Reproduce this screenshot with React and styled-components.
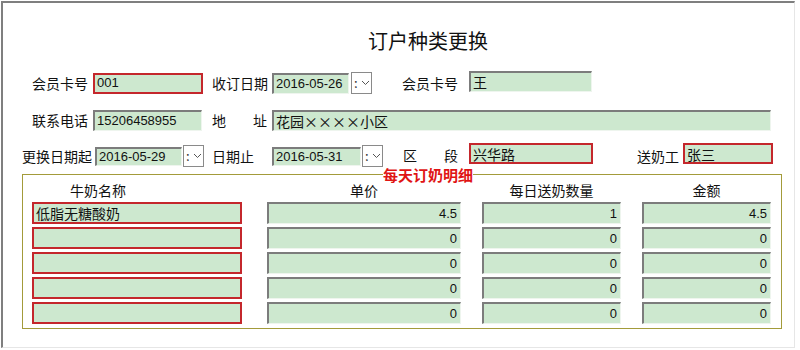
import React from 'react';
import styled, { createGlobalStyle } from 'styled-components';

const Global = createGlobalStyle`
    body {
        margin: 0;
        background: #fff;
        font-family: "Noto Sans CJK SC", sans-serif;
        color: #111;
    }
`
const Window = styled.div`
    box-sizing: border-box;
    margin: 1px 0 0 1px;
    width: 794px;
    height: 347px;
    border-top: 2px solid #7f7f7f;
    border-left: 2px solid #7f7f7f;
    border-right: 1px solid #e6e6e6;
    border-bottom: 1px solid #e6e6e6;
    padding-top: 27px;
`
const Title = styled.h1`
    margin: 0;
    padding-left: 365px;
    font-size: 20px;
    font-weight: normal;
    line-height: 22px;
`
const Row = styled.div`
    display: flex;
    align-items: center;
    height: 22px;
    margin-top: ${props => props.$mt}px;
    padding-left: ${props => props.$pl}px;
`
const Label = styled.span`
    font-size: 14px;
    line-height: 14px;
    white-space: nowrap;
    margin-left: ${props => props.$ml || 0}px;
    margin-bottom: ${props => props.$lift || 0}px;
`
const SplitLabel = styled(Label)`
    display: flex;
    justify-content: space-between;
    width: ${props => props.$w}px;
`
const Field = styled.div`
    box-sizing: border-box;
    display: flex;
    align-items: center;
    justify-content: ${props => props.$right ? 'flex-end' : 'flex-start'};
    width: ${props => props.$w}px;
    height: ${props => props.$h || 21}px;
    margin-left: ${props => props.$ml || 0}px;
    margin-bottom: ${props => props.$lift || 0}px;
    padding: 0 3px 0 2px;
    background: #cde8cf;
    font-family: ${props => props.$num ? '"Liberation Sans", "Noto Sans CJK SC", sans-serif' : '"Noto Sans CJK SC", sans-serif'};
    font-size: ${props => props.$num ? 13 : 14}px;
    line-height: 16px;
    white-space: nowrap;
    overflow: hidden;
    ${props => props.$red ? `
        border: 2px solid #c4272c;
    ` : `
        border-top: 2px solid #7c7c7c;
        border-left: 2px solid #7c7c7c;
        border-right: 1px solid #eef5ee;
        border-bottom: 1px solid #eef5ee;
    `}
`
const DropBtn = styled.div`
    box-sizing: border-box;
    display: flex;
    align-items: center;
    gap: 3px;
    width: 21px;
    height: 22px;
    margin-left: ${props => props.$ml || 1}px;
    padding-left: 2px;
    border: 1px solid #8a8a8a;
    background: #fff;
    font-size: 13px;
    line-height: 14px;
    color: #333;
`
const Group = styled.fieldset`
    box-sizing: border-box;
    width: 760px;
    margin: -2px 0 0 19px;
    padding: 0 0 4px 9px;
    border: 1px solid #a39b3a;
`
const Legend = styled.legend`
    margin-left: 351px;
    padding: 2px 0 0;
    font-size: 15px;
    font-weight: bold;
    line-height: 16px;
    color: #e01414;
`
const Grid = styled.div`
    display: grid;
    grid-template-columns: 214px 194px 139px 129px;
    column-gap: 21px;
    row-gap: 3px;
`
const Head = styled.div`
    font-size: 14px;
    line-height: 14px;
    padding: 0 0 2px ${props => props.$pl || 0}px;
    text-align: ${props => props.$pl ? 'left' : 'center'};
`

const Drop = ({ml}) => (
    <DropBtn $ml={ml}>
        <span>:</span>
        <svg width="9" height="6" viewBox="0 0 9 6">
            <polyline points="1,1 4.5,4.5 8,1" fill="none" stroke="#555" strokeWidth="1"/>
        </svg>
    </DropBtn>
)

const rows = [
    {name: '低脂无糖酸奶', price: '4.5', qty: '1', amount: '4.5'},
    {name: '', price: '0', qty: '0', amount: '0'},
    {name: '', price: '0', qty: '0', amount: '0'},
    {name: '', price: '0', qty: '0', amount: '0'},
    {name: '', price: '0', qty: '0', amount: '0'},
]

export default () => {
    return (
        <Window>
            <Global/>
            <Title>订户种类更换</Title>
            <Row $mt={20} $pl={29}>
                <Label>会员卡号</Label>
                <Field $red $w={110} $ml={5} $num>001</Field>
                <Label $ml={9}>收订日期</Label>
                <Field $w={77} $ml={4} $num>2016-05-26</Field>
                <Drop ml={2}/>
                <Label $ml={30}>会员卡号</Label>
                <Field $w={123} $ml={11} $lift={3}>王</Field>
            </Row>
            <Row $mt={15} $pl={29}>
                <Label>联系电话</Label>
                <Field $w={109} $ml={5} $num>15206458955</Field>
                <SplitLabel $w={55} $ml={10}><span>地</span><span>址</span></SplitLabel>
                <Field $w={499} $ml={5}>花园××××小区</Field>
            </Row>
            <Row $mt={14} $pl={19}>
                <Label>更换日期起</Label>
                <Field $w={87} $h={19} $ml={3} $num>2016-05-29</Field>
                <Drop ml={1}/>
                <Label $ml={8}>日期止</Label>
                <Field $w={89} $h={19} $ml={18} $num>2016-05-31</Field>
                <Drop ml={1}/>
                <SplitLabel $w={55} $ml={20} $lift={2}><span>区</span><span>段</span></SplitLabel>
                <Field $red $w={124} $ml={11} $lift={5}>兴华路</Field>
                <Label $ml={44}>送奶工</Label>
                <Field $red $w={90} $ml={4} $lift={5}>张三</Field>
            </Row>
            <Group>
                <Legend>每天订奶明细</Legend>
                <Grid>
                    <Head $pl={38}>牛奶名称</Head>
                    <Head>单价</Head>
                    <Head>每日送奶数量</Head>
                    <Head>金额</Head>
                    {rows.map((r, i) => (
                        <React.Fragment key={i}>
                            <Field $red $w={210} $h={22}>{r.name}</Field>
                            <Field $w={194} $h={22} $right $num>{r.price}</Field>
                            <Field $w={139} $h={22} $right $num>{r.qty}</Field>
                            <Field $w={129} $h={22} $right $num>{r.amount}</Field>
                        </React.Fragment>
                    ))}
                </Grid>
            </Group>
        </Window>
    )
}
